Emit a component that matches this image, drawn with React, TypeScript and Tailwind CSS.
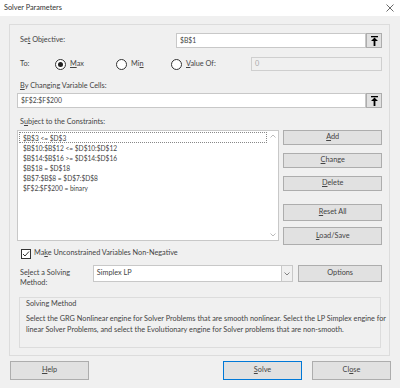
import React from "react";

const U = ({ children }: { children: React.ReactNode }) => <span className="underline underline-offset-[1px]">{children}</span>;

const ArrowBtn = () => (
  <div className="w-[16px] h-[15px] bg-[#e1e1e1] border border-[#adadad] flex items-center justify-center shrink-0">
    <svg width="9" height="10" viewBox="0 0 9 10">
      <rect x="1" y="0" width="7" height="1.3" fill="#000" />
      <path d="M4.5 1.5 L8 5 L5.4 5 L5.4 10 L3.6 10 L3.6 5 L1 5 Z" fill="#000" />
    </svg>
  </div>
);

const Radio = ({ on }: { on?: boolean }) => (
  <div className="w-[11px] h-[11px] rounded-full border border-[#333] bg-white flex items-center justify-center shrink-0">
    {on && <div className="w-[5px] h-[5px] rounded-full bg-[#222]" />}
  </div>
);

const Btn = ({ children, cls }: { children: React.ReactNode; cls: string }) => (
  <div className={"bg-[#e1e1e1] border border-[#adadad] flex items-center justify-center text-[#444] " + cls}>{children}</div>
);

export default function App() {
  const font = { fontFamily: 'Lato, "Noto Sans", sans-serif' };
  return (
    <div className="w-[400px] h-[388px] bg-[#f0f0f0] text-[7.3px] text-[#444] flex flex-col overflow-hidden" style={font}>
      <div className="h-[16px] bg-white flex items-center justify-between pl-[4px] pr-[6px] shrink-0">
        <span className="text-[7.3px] text-[#333] leading-none">Solver Parameters</span>
        <svg width="8" height="8" viewBox="0 0 8 8">
          <path d="M0.5 0.5 L7.5 7.5 M7.5 0.5 L0.5 7.5" stroke="#444" strokeWidth="0.8" />
        </svg>
      </div>
      <div className="pl-[9px] pr-[10px] pt-[8px] shrink-0">
        <div className="h-[332px] border border-[#dcdcdc] pl-[7px] pr-[7px] flex flex-col">
          {/* Set Objective */}
          <div className="flex items-center mt-[8px] h-[15px]">
            <span className="w-[159px] pl-[3px]">Se<U>t</U> Objective:</span>
            <div className="flex-1 h-[15px] bg-white border border-[#c8c8c8] flex items-center pl-[3px] text-[6.8px]">$B$1</div>
            <ArrowBtn />
          </div>
          {/* To */}
          <div className="flex items-center mt-[9px] h-[14px]">
            <span className="w-[38px] pl-[3px]">To:</span>
            <div className="flex items-center gap-[4px] w-[61px]"><Radio on /><span><U>M</U>ax</span></div>
            <div className="flex items-center gap-[4px] w-[55px]"><Radio /><span>Mi<U>n</U></span></div>
            <div className="flex items-center gap-[4px] w-[80px]"><Radio /><span><U>V</U>alue Of:</span></div>
            <div className="flex-1 h-[14px] border border-[#cfcfcf] bg-[#f0f0f0] text-[#aaa] flex items-center pl-[3px]">0</div>
          </div>
          {/* By changing */}
          <div className="mt-[10px] pl-[3px] h-[11px] flex items-center"><U>B</U>y Changing Variable Cells:</div>
          <div className="flex items-center mt-[1px] h-[15px]">
            <div className="flex-1 h-[15px] bg-white border border-[#c8c8c8] flex items-center pl-[3px] text-[6.8px]">$F$2:$F$200</div>
            <ArrowBtn />
          </div>
          {/* Subject */}
          <div className="mt-[9px] pl-[3px] h-[11px] flex items-center">S<U>u</U>bject to the Constraints:</div>
          <div className="flex mt-[2px]">
            <div className="w-[266px] h-[111px] bg-white border border-[#c8c8c8] flex">
              <div className="flex-1 pt-[1px] pl-[1px] leading-[10px] text-[6.6px]">
                <div className="border border-dotted border-[#888] pl-[3px] h-[11px] flex items-center">$B$3 &lt;= $D$3</div>
                {["$B$10:$B$12 <= $D$10:$D$12", "$B$14:$B$16 >= $D$14:$D$16", "$B$18 = $D$18", "$B$7:$B$8 = $D$7:$D$8", "$F$2:$F$200 = binary"].map((t) => (
                  <div key={t} className="pl-[4px] h-[10px] flex items-center whitespace-nowrap">{t}</div>
                ))}
              </div>
              <div className="w-[11px] flex flex-col justify-between items-center py-[3px]">
                <svg width="6" height="4" viewBox="0 0 6 4"><path d="M0.5 3.5 L3 1 L5.5 3.5" stroke="#aaa" fill="none" strokeWidth="0.8" /></svg>
                <svg width="6" height="4" viewBox="0 0 6 4"><path d="M0.5 0.5 L3 3 L5.5 0.5" stroke="#aaa" fill="none" strokeWidth="0.8" /></svg>
              </div>
            </div>
            <div className="ml-[4px] w-[100px] flex flex-col">
              <Btn cls="h-[15px]"><span><U>A</U>dd</span></Btn>
              <Btn cls="h-[15px] mt-[8px]"><span><U>C</U>hange</span></Btn>
              <Btn cls="h-[15px] mt-[8px]"><span><U>D</U>elete</span></Btn>
              <Btn cls="h-[17px] mt-[13px]"><span><U>R</U>eset All</span></Btn>
              <Btn cls="h-[18px] mt-[6px]"><span><U>L</U>oad/Save</span></Btn>
            </div>
          </div>
          {/* checkbox */}
          <div className="flex items-center mt-[3px] h-[11px] pl-[4px] gap-[3px]">
            <div className="w-[10px] h-[10px] border border-[#333] bg-white flex items-center justify-center">
              <svg width="8" height="8" viewBox="0 0 8 8"><path d="M1 4 L3 6 L7 1.5" stroke="#333" fill="none" strokeWidth="1" /></svg>
            </div>
            <span>Ma<U>k</U>e Unconstrained Variables Non-Negative</span>
          </div>
          {/* Select solving method */}
          <div className="flex items-start mt-[6px]">
            <div className="w-[77px] pl-[3px] leading-[10px] pt-[3px]">Se<U>l</U>ect a Solving<br />Method:</div>
            <div className="w-[204px] h-[17px] bg-white border border-[#c8c8c8] flex items-center">
              <span className="flex-1 pl-[3px]">Simplex LP</span>
              <div className="w-[11px] h-full border-l border-[#c8c8c8] bg-[#f0f0f0] flex items-center justify-center">
                <svg width="6" height="4" viewBox="0 0 6 4"><path d="M0.5 0.5 L3 3 L5.5 0.5" stroke="#666" fill="none" strokeWidth="0.8" /></svg>
              </div>
            </div>
            <Btn cls="ml-[5px] w-[85px] h-[17px]"><span>Opt<U>i</U>ons</span></Btn>
          </div>
          {/* Solving method group */}
          <div className="mt-[9px] ml-[2px] mr-[1px] h-[51px] border border-[#dcdcdc] px-[6px] pt-[1px]">
            <div className="h-[11px] flex items-center">Solving Method</div>
            <div className="mt-[3px] leading-[11px] whitespace-nowrap">
              Select the GRG Nonlinear engine for Solver Problems that are smooth nonlinear. Select the LP Simplex engine for<br />
              linear Solver Problems, and select the Evolutionary engine for Solver problems that are non-smooth.
            </div>
          </div>
        </div>
      </div>
      <div className="flex items-center mt-[5px] pl-[10px] h-[19px]">
        <Btn cls="w-[79px] h-[19px]"><span><U>H</U>elp</span></Btn>
        <div className="w-[134px]" />
        <div className="w-[79px] h-[19px] bg-[#e1e1e1] border border-[#0078d7] flex items-center justify-center"><span><U>S</U>olve</span></div>
        <div className="w-[10px]" />
        <Btn cls="w-[79px] h-[19px]"><span>Cl<U>o</U>se</span></Btn>
      </div>
    </div>
  );
}
